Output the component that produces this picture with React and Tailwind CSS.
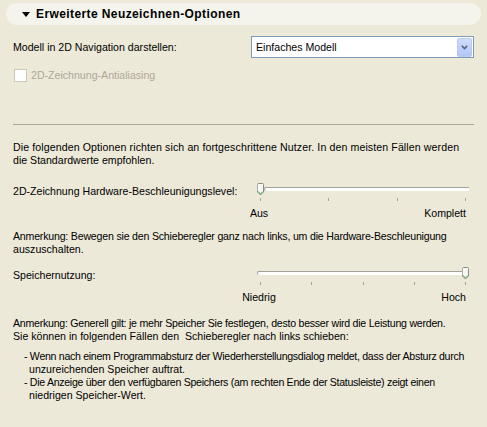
import React from "react";

const FONT = "font-['Liberation_Sans','Arial',sans-serif]";

function Thumb() {
  return (
    <svg width="7" height="13" viewBox="0 0 7 13" className="block">
      <path d="M0.5,1.5 Q0.5,0.5 1.5,0.5 H5.5 Q6.5,0.5 6.5,1.5 V9 L3.5,12 L0.5,9 Z" fill="#f6f6f2" stroke="#8a8a84" />
      <path d="M1.2,8.6 L3.5,10.9 L5.8,8.6" fill="none" stroke="#3cb043" />
      <path d="M1.2,1.5 V8.2" fill="none" stroke="#ffffff" />
    </svg>
  );
}

function Slider({ value, ticks, left, right }) {
  // value is 0 (far left) or 1 (far right)
  return (
    <div className="w-[223px] shrink-0">
      <div className="flex h-[13px] items-start">
        <div className="ml-[6px] flex w-[212px] items-start">
          {value === 0 && <Thumb />}
          <div className="mt-[4px] h-[4px] flex-1 rounded-l-sm border-t border-l border-[#a3a29a] bg-white" />
          {value === 1 && <Thumb />}
        </div>
      </div>
      <div className="ml-[9px] mt-[2px] flex h-[3px] w-[206px] justify-between">
        {Array.from({ length: ticks }).map((_, i) => (
          <div key={i} className="h-[3px] w-px bg-[#a5a49c]" />
        ))}
      </div>
      <div className="mt-[6px] flex h-[13px] items-center justify-between leading-[13px]">
        <div className="ml-[8px] flex w-0 justify-center whitespace-nowrap">{left}</div>
        <div className="mr-[8px] whitespace-nowrap">{right}</div>
      </div>
    </div>
  );
}

export default function App() {
  return (
    <div className={`h-[427px] w-[487px] overflow-hidden bg-[#ece9d8] text-[10.6px] leading-[13px] text-black ${FONT}`}>
      <div className="ml-[6px] mr-[6px] mt-[3px] flex h-[22px] items-center rounded-full bg-[#f4f3ec] pl-[16px]">
        <svg width="8" height="5" viewBox="0 0 8 5" className="mr-[6px]">
          <path d="M0,0 H8 L4,5 Z" fill="#000" />
        </svg>
        <span className="text-[12px] font-bold tracking-[0.4px]">Erweiterte Neuzeichnen-Optionen</span>
      </div>

      <div className="whitespace-nowrap px-[13px]">
        <div className="mt-[11px] flex h-[22px] items-center justify-between">
          <span>Modell in 2D Navigation darstellen:</span>
          <div className="flex h-[22px] w-[223px] items-center border border-[#7f9db9] bg-white pl-[4px] pr-px">
            <span className="flex-1">Einfaches Modell</span>
            <div className="flex h-[19px] w-[15px] items-center justify-center rounded-[2px] border border-[#b8c9f0] bg-gradient-to-b from-[#d0dcfc] to-[#b2c6f6]">
              <svg width="7" height="5" viewBox="0 0 7 5">
                <path d="M0.8,0.8 L3.5,3.5 L6.2,0.8" fill="none" stroke="#4d6185" strokeWidth="1.6" />
              </svg>
            </div>
          </div>
        </div>

        <div className="mt-[11px] flex items-center gap-[4px] text-[#aca899]">
          <div className="ml-px h-[13px] w-[13px] border border-[#cac8bb] bg-white" />
          <span>2D-Zeichnung-Antialiasing</span>
        </div>

        <div className="mt-[42px] border-t border-[#aca899]" />

        <p className="mt-[16px]">
          <span className="tracking-[0.1px]">Die folgenden Optionen richten sich an fortgeschrittene Nutzer. In den meisten Fällen werden</span>
          <br />
          die Standardwerte empfohlen.
        </p>

        <div className="mt-[16px] flex items-start justify-between">
          <span className="mt-[2px]">2D-Zeichnung Hardware-Beschleunigungslevel:</span>
          <Slider value={0} ticks={4} left="Aus" right="Komplett" />
        </div>

        <p className="mt-[10px]">
          <span className="tracking-[-0.2px]">Anmerkung: Bewegen sie den Schieberegler ganz nach links, um die Hardware-Beschleunigung</span>
          <br />
          auszuschalten.
        </p>

        <div className="mt-[11px] flex items-start justify-between">
          <span className="mt-[2px]">Speichernutzung:</span>
          <Slider value={1} ticks={5} left="Niedrig" right="Hoch" />
        </div>

        <p className="mt-[13px]">
          <span className="tracking-[-0.25px]">Anmerkung: Generell gilt: je mehr Speicher Sie festlegen, desto besser wird die Leistung werden.</span>
          <br />
          Sie können in folgenden Fällen den&nbsp; Schieberegler nach links schieben:
        </p>

        <div className="mt-[7px] pl-[11px]">
          <p className="pl-[5px] -indent-[5px]">
            <span className="tracking-[-0.3px]">- Wenn nach einem Programmabsturz der Wiederherstellungsdialog meldet, dass der Absturz durch</span>
            <br />
            unzureichenden Speicher auftrat.
          </p>
          <p className="pl-[5px] -indent-[5px]">
            <span className="tracking-[-0.3px]">- Die Anzeige über den verfügbaren Speichers (am rechten Ende der Statusleiste) zeigt einen</span>
            <br />
            niedrigen Speicher-Wert.
          </p>
        </div>
      </div>
    </div>
  );
}
